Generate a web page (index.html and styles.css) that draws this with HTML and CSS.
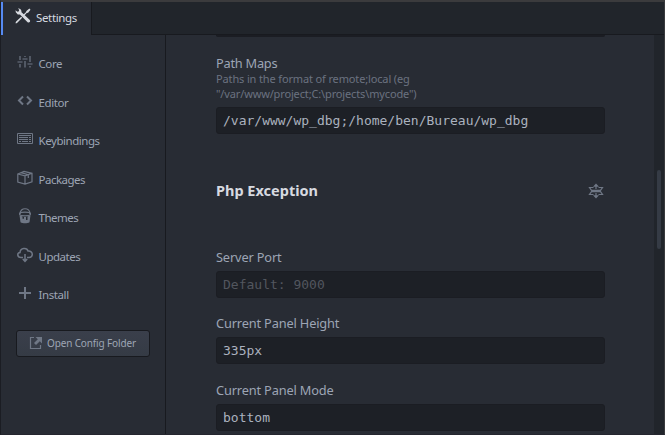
FILE: index.html
```html
<!DOCTYPE html>
<html lang="en">
<head>
<meta charset="utf-8">
<title>Settings</title>
<link rel="stylesheet" href="styles.css">
</head>
<body>
<div class="window">
  <header class="tabs">
    <div class="tab">
      <svg class="tab-icon" viewBox="0 0 16 16"><path d="M4.900 6.500 2.800 6.400.8 4.300.5 2.300l1.900 1.500 1.500-.5.3-1.500L2.900.5C5 .2 6.800 1.700 6.500 4.200l2 1.900L14.800 12c1.200 1.400-.8 3.400-2.200 2.200L6.900 8.400zM11.400 2.900 14.400.6l1.100 1.100-2.400 3-1.400.4-2.500 2.600-1-1 2.700-2.500zM6.200 8.800l1 1-4.900 5-1.300.6-.5-.5.6-1.300z"/></svg>
      <span>Settings</span>
    </div>
    <div class="tab-fill"></div>
  </header>
  <main class="body">
    <nav class="sidebar">
      <ul class="menu">
        <li><svg viewBox="0 0 16 16"><path class="line" d="M3 2v4M3 10v3.500M8 2v1M8 7v6.500M13 2v6M13 12v1.500M.5 8h5M5.500 5h5M10.500 10h5"/></svg><span class="core">Core</span></li>
        <li><svg viewBox="0 0 16 16"><path class="line thick" d="M6 3.500 2 7.500 6 11.500M10 3.500l4 4-4 4"/></svg><span class="editor">Editor</span></li>
        <li><svg viewBox="0 0 16 16"><path class="line thin" d="M.5 2.500h15v10H.5zM2 4.500h12M2 6.500h9M12 6.500h2M2 8.500h9M12 8.500h2M2 10.500h2M5 10.500h6M12 10.500h2"/></svg><span class="keybindings">Keybindings</span></li>
        <li><svg viewBox="0 0 16 16"><path class="line" d="M.8 4 7 1.500l8 1.800v8.500L8 14 .8 12zM.8 4 8 5.800l7-2.500M8 5.800V14M4 2.700l7.300 2V8"/></svg><span class="packages">Packages</span></li>
        <li><svg viewBox="0 0 16 16"><path class="line" d="M3 6c0-7 10-7 10 0"/><ellipse class="line" cx="8" cy="6" rx="5.500" ry="1.800"/><path class="fill" d="m2.500 7.200 3 1.300v2.300h1.500V9h2v3h1.500V8.500l3-1.300-1 7c-2 1.500-7 1.500-9 0z"/></svg><span class="themes">Themes</span></li>
        <li><svg viewBox="0 0 16 16"><path class="line cloud" d="M6 10.500H4C0 10.500-.2 6 3 5.500 3.300.5 10 .3 11 4c5.500-.5 5.500 6.500 1 6.500h-2M8 7v7M5.800 12 8 14.300l2.200-2.300"/></svg><span class="updates">Updates</span></li>
        <li><svg viewBox="0 0 16 16"><path class="line plus" d="M8 2v12M2 8h12"/></svg><span class="install">Install</span></li>
      </ul>
      <button class="config">
        <svg viewBox="0 0 14 14"><path class="line" d="M5 1.500H1.500v11h10V9"/><path class="fill" d="M6.500 1H13v6.500l-2.200-2.200L7 9 5 7l3.800-3.700z"/></svg>
        <span>Open Config Folder</span>
      </button>
    </nav>
    <section class="content">
      <div class="field previous"></div>
      <div class="label path-maps"><span>Path Maps</span></div>
      <div class="hint"><span class="hint-a">Paths in the format of remote;local (eg</span><br><span class="hint-b">"/var/www/project;C:\projects\mycode")</span></div>
      <div class="field">/var/www/wp_dbg;/home/ben/Bureau/wp_dbg</div>
      <div class="heading">
        <h3>Php Exception</h3>
        <svg viewBox="0 0 16 16"><path class="line" d="M8 3v3M8 10v3M5.500 4.500H1.500L3.500 7.400h9l2-2.900h-4M5.500 11.500H1.500L3.500 8.600h9l2 2.900h-4"/><path class="fill" d="m8 .5 3 3.300H5zM8 15.500l3-3.300H5z"/></svg>
      </div>
      <div class="label port"><span>Server Port</span></div>
      <div class="field placeholder">Default: 9000</div>
      <div class="label height"><span>Current Panel Height</span></div>
      <div class="field">335px</div>
      <div class="label mode"><span>Current Panel Mode</span></div>
      <div class="field">bottom</div>
    </section>
    <div class="track"><div class="thumb"></div></div>
  </main>
</div>
</body>
</html>
```
FILE: styles.css
```css
* { box-sizing: border-box; }
body { margin: 0; background: #282c34; color: #9da5b4; font-family: "Noto Sans", sans-serif; overflow: hidden; }
.window { width: 665px; height: 435px; display: flex; flex-direction: column; border-top: 2px solid #3b3b3d; border-left: 1px solid #1b1d23; border-right: 1px solid #393a3d; border-bottom: 1px solid #25262f; background: #282c34; }
svg { display: block; flex: none; }
.line { fill: none; stroke: #6f7785; stroke-width: 1.2; }
.thin { stroke-width: 1; }
.thick { stroke-width: 2; }
.cloud { stroke-width: 1.5; }
.plus { stroke-width: 2; }
.fill { fill: #6f7785; }
.tabs { display: flex; height: 33px; flex: none; }
.tab { width: 91px; border-left: 2px solid #568af2; border-right: 1px solid #181a1f; padding: 0 0 0 12px; display: flex; align-items: flex-start; color: #d7dae0; font-size: 11.500px; letter-spacing: -.35px; line-height: 32px; }
.tab-icon { width: 16px; height: 16px; margin: 6px 5px 0 0; fill: #d7dae0; }
.tab-fill { flex: 1; background: #21252b; border-bottom: 1px solid #181a1f; }
.body { flex: 1; min-height: 0; display: flex; }
.sidebar { width: 165px; border-right: 1px solid #181a1f; padding: 9px 15px 0; flex: none; }
.menu { margin: 0; padding: 0; list-style: none; }
.menu li { display: flex; height: 38.500px; font-size: 11.500px; line-height: 40px; gap: 5.500px; letter-spacing: -.4px; }
.menu .keybindings { letter-spacing: -.45px; }
.menu .packages, .menu .updates, .menu .themes { letter-spacing: -.5px; }
.menu svg { width: 16px; height: 16px; margin: 10px 0 0 1px; }
.config { width: 134px; height: 27px; margin: 16px 0 0; padding: 0 0 1px 12px; border: 1px solid #181a1f; border-radius: 3px; background: linear-gradient(#3a3f4b, #353b45); color: #9da5b4; font: 10px/24px "Noto Sans", sans-serif; letter-spacing: -.14px; display: flex; align-items: center; gap: 4px; white-space: nowrap; }
.config svg { width: 14px; height: 14px; }
.content { flex: 1; padding: 0 49px 0 50px; overflow: hidden; }
.field { height: 27px; border: 1px solid #1b1d23; border-radius: 3px; background: #1d2026; padding-left: 6px; font: 13px/26px "DejaVu Sans Mono", monospace; color: #abb2bf; white-space: pre; }
.previous { height: 2px; border-radius: 0 0 3px 3px; }
.placeholder { color: #52565e; }
.label { font-size: 12.800px; line-height: 18px; height: 18px; letter-spacing: -.16px; white-space: nowrap; }
.label.path-maps { margin-top: 17px; letter-spacing: -.25px; }
.hint { height: 33px; margin-top: -1px; margin-bottom: 3px; font-size: 11px; line-height: 15px; letter-spacing: -.14px; color: #6b7280; white-space: nowrap; }
.heading { display: flex; align-items: center; justify-content: space-between; height: 24px; margin-top: 45px; margin-bottom: 45px; }
.heading h3 { margin: 0 0 2px; font-size: 14.500px; line-height: 22px; color: #d7dae0; font-weight: 700; }
.heading svg { width: 16px; height: 16px; margin: 0 1px 1px 0; }
.port { margin-bottom: 5px; }
.height { margin: 16px 0 5px; }
.mode { margin: 17px 0 5px; }
.track { width: 10px; background: #21252b; padding: 135px 3px 0; }
.thumb { width: 4px; height: 79px; border-radius: 2px; background: #353b45; }
```
